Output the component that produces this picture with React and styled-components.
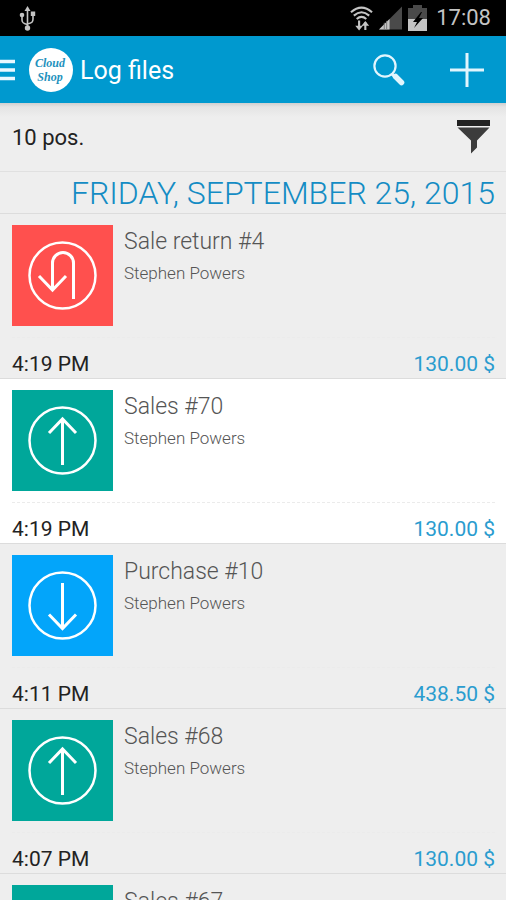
import React from "react";
import styled, { createGlobalStyle } from "styled-components";

const GlobalStyle = createGlobalStyle`
  *, *::before, *::after { box-sizing: border-box; }
  body { margin: 0; background: #eee; }
  button { border: 0; padding: 0; background: none; cursor: pointer; font: inherit; color: inherit; }
`;

const Screen = styled.div`
  display: flex;
  flex-direction: column;
  height: 100vh;
  overflow: hidden;
  background: #eee;
  color: #222;
  font-family: Roboto, "Noto Sans", sans-serif;
`;

const StatusBar = styled.div`
  display: flex;
  flex: none;
  align-items: center;
  height: 36px;
  padding: 0 15px 0 19px;
  background: #000;
  color: #c4c4c4;
  svg { display: block; }
`;

const StatusIcons = styled.div`
  display: flex;
  align-items: center;
  gap: 6px;
  margin-left: auto;
`;

const Clock = styled.time`
  margin-left: 3px;
  font-size: 22px;
  line-height: 36px;
`;

const AppBar = styled.header`
  display: flex;
  flex: none;
  align-items: center;
  height: 67px;
  padding-right: 22px;
  background: #0099cf;
  color: #fff;
`;

const IconButton = styled.button`
  display: block;
  flex: none;
  svg { display: block; }
`;

const HomeButton = styled(IconButton)`
  display: flex;
  align-items: center;
  gap: 13px;
`;

const Title = styled.h1`
  flex: 1;
  margin: 0 0 0 6px;
  padding-top: 2px;
  font-size: 25px;
  font-weight: 400;
  line-height: 32px;
`;

const Actions = styled.div`
  display: flex;
  align-items: center;
  gap: 45px;
`;

const Summary = styled.div`
  display: flex;
  flex: none;
  align-items: center;
  justify-content: space-between;
  height: 69px;
  padding: 0 15px 0 12px;
  border-bottom: 1px solid #e0e0e0;
  background: linear-gradient(#cfcfcf, #e4e4e4 4px, #eee 14px);
  font-size: 22px;
`;

const DateHeading = styled.h2`
  flex: none;
  margin: 0;
  padding: 2px 11px 0 12px;
  border-bottom: 1px solid #dcdcdc;
  color: #148cc4;
  font-size: 32px;
  font-weight: 300;
  line-height: 39px;
  text-align: right;
  text-transform: uppercase;
`;

const List = styled.ul`
  flex: 1;
  min-height: 0;
  margin: 0;
  padding: 0;
  overflow-y: auto;
  scrollbar-width: none;
  list-style: none;
`;

const Row = styled.li`
  padding: 11px 11px 0 12px;
  border-bottom: 1px solid #dcdcdc;
  background: ${({ $selected }) => ($selected ? "#fff" : "#eee")};
`;

const RowMain = styled.div`
  display: flex;
  gap: 11px;
  padding-bottom: 11px;
  border-bottom: 1px dashed #ebebeb;
`;

const Tile = styled.div`
  flex: none;
  background: ${({ $color }) => $color};
  svg { display: block; }
`;

const RowTitle = styled.h3`
  margin: 0;
  padding-top: 2px;
  color: #555;
  font-size: 23px;
  font-weight: 300;
  line-height: 30px;
`;

const Person = styled.p`
  margin: 4px 0 0;
  color: #555;
  font-size: 17px;
  font-weight: 300;
  line-height: 24px;
`;

const RowFooter = styled.div`
  display: flex;
  align-items: flex-end;
  justify-content: space-between;
  height: 40px;
  font-size: 21px;
  line-height: 27px;
`;

const Time = styled.time`
  color: #222;
`;

const Amount = styled.span`
  color: #2a9ccf;
`;

const UsbIcon = () => (
  <svg width="17" height="25" viewBox="0 0 17 25" fill="none" stroke="currentColor" strokeWidth="1.6" aria-hidden="true">
    <path d="M8.5 3v19M8.5 18.500C4 17.500 3 16.500 3 14V9M8.500 18C13 17 14 16 14 13V8" />
    <path d="M8.500 0l3 5h-6z" fill="currentColor" stroke="none" />
    <circle cx="8.500" cy="22" r="2.700" fill="currentColor" stroke="none" />
    <circle cx="3" cy="9" r="2.300" fill="currentColor" stroke="none" />
    <path d="M11.800 5.500h4.400v4.400h-4.400z" fill="currentColor" stroke="none" />
  </svg>
);

const WifiIcon = () => (
  <svg width="23" height="25" viewBox="0 0 24 26" fill="none" stroke="currentColor" strokeWidth="2.200" aria-hidden="true">
    <path d="M1 6.500Q12-3 23 6.500M4 10Q12 3 20 10M7 13.500Q12 9 17 13.500" />
    <path d="M9.500 15v8M16 25v-8" />
    <path d="M5.500 20.500h8l-4 5zM12 20.500h8l-4-5z" fill="currentColor" stroke="none" />
  </svg>
);

const SignalIcon = () => (
  <svg width="23" height="24" viewBox="0 0 24 24" aria-hidden="true">
    <path d="M24 0v24H0z" fill="#4a4a4a" />
    <path d="M11 13v11H0z" fill="currentColor" />
    <path d="M5.500 17v7M8 15v9" stroke="#777" strokeWidth="1" />
  </svg>
);

const BatteryIcon = () => (
  <svg width="19" height="26" viewBox="0 0 19 26" aria-hidden="true">
    <path d="M5 0h9v3h5v23H0V3h5z" fill="#4a4a4a" />
    <path d="M0 14h19v12H0z" fill="currentColor" />
    <path d="M13 7L5 17h4l-3 6 9-10h-4l3-6z" fill="#000" />
  </svg>
);

const MenuIcon = () => (
  <svg width="15" height="22" viewBox="0 0 15 22" aria-hidden="true">
    <path d="M0 2.500h15M0 11h15M0 19.500h15" stroke="#eaf8ff" strokeWidth="3.400" />
  </svg>
);

const Logo = () => (
  <svg width="46" height="46" viewBox="0 0 46 46" role="img" aria-label="Cloud Shop">
    <circle cx="23" cy="23" r="22" fill="#fff" />
    <g fill="#2391bd" fontFamily="'Liberation Serif', serif" fontStyle="italic" fontWeight="700" fontSize="12" textAnchor="middle">
      <text x="22" y="20">Cloud</text>
      <text x="22" y="34">Shop</text>
    </g>
  </svg>
);

const SearchIcon = () => (
  <svg width="32" height="32" viewBox="0 0 32 32" fill="none" stroke="#e2f5fd" aria-hidden="true">
    <circle cx="12" cy="12" r="10.600" strokeWidth="2.200" />
    <path d="M18.500 19.500l4 4" strokeWidth="3" />
    <path d="M22.500 22.500l6 6" strokeWidth="5.500" strokeLinecap="round" />
  </svg>
);

const PlusIcon = () => (
  <svg width="34" height="34" viewBox="0 0 34 34" aria-hidden="true">
    <path d="M17 0v34M0 17h34" stroke="#e2f5fd" strokeWidth="3" />
  </svg>
);

const FilterIcon = () => (
  <svg width="35" height="34" viewBox="0 0 35 34" fill="#3c3c3c" aria-hidden="true">
    <path d="M1 0h33v6H1z" fill="#222" />
    <path d="M1.500 7.500h32L21 20.500v7l-6 6V20.500z" />
  </svg>
);

const glyphs = {
  return: "M40.500 63V38a10.500 10.500 0 0 1 21 0V74M27 51l13.500 14L54 51",
  up: "M50.500 75V29M37 43l13.500-14L64 43",
  down: "M50.500 28V73M37 59.500l13.500 14 13.500-14",
};

const colors = { return: "#ff504e", up: "#00a79a", down: "#03a5fa" };

const KindTile = ({ kind }) => (
  <Tile $color={colors[kind]}>
    <svg width="101" height="101" viewBox="0 0 101 101" fill="none" stroke="#fff" strokeWidth="3" aria-hidden="true">
      <circle cx="50.500" cy="50.500" r="33" strokeWidth="2.500" />
      <path d={glyphs[kind]} />
    </svg>
  </Tile>
);

const entries = [
  { kind: "return", title: "Sale return #4", time: "4:19 PM", amount: "130.00 $" },
  { kind: "up", title: "Sales #70", time: "4:19 PM", amount: "130.00 $", selected: true },
  { kind: "down", title: "Purchase #10", time: "4:11 PM", amount: "438.50 $" },
  { kind: "up", title: "Sales #68", time: "4:07 PM", amount: "130.00 $" },
  { kind: "up", title: "Sales #67", time: "", amount: "" },
];

export default function App() {
  return (
    <Screen>
      <GlobalStyle />
      <StatusBar>
        <UsbIcon />
        <StatusIcons>
          <WifiIcon />
          <SignalIcon />
          <BatteryIcon />
          <Clock>17:08</Clock>
        </StatusIcons>
      </StatusBar>
      <AppBar>
        <HomeButton type="button" aria-label="Open menu">
          <MenuIcon />
          <Logo />
        </HomeButton>
        <Title>Log files</Title>
        <Actions>
          <IconButton type="button" aria-label="Search"><SearchIcon /></IconButton>
          <IconButton type="button" aria-label="Add"><PlusIcon /></IconButton>
        </Actions>
      </AppBar>
      <Summary>
        <span>10 pos.</span>
        <IconButton type="button" aria-label="Filter"><FilterIcon /></IconButton>
      </Summary>
      <DateHeading>Friday, September 25, 2015</DateHeading>
      <List>
        {entries.map((entry) => (
          <Row key={entry.title} $selected={entry.selected}>
            <RowMain>
              <KindTile kind={entry.kind} />
              <div>
                <RowTitle>{entry.title}</RowTitle>
                <Person>Stephen Powers</Person>
              </div>
            </RowMain>
            <RowFooter>
              <Time>{entry.time}</Time>
              <Amount>{entry.amount}</Amount>
            </RowFooter>
          </Row>
        ))}
      </List>
    </Screen>
  );
}
